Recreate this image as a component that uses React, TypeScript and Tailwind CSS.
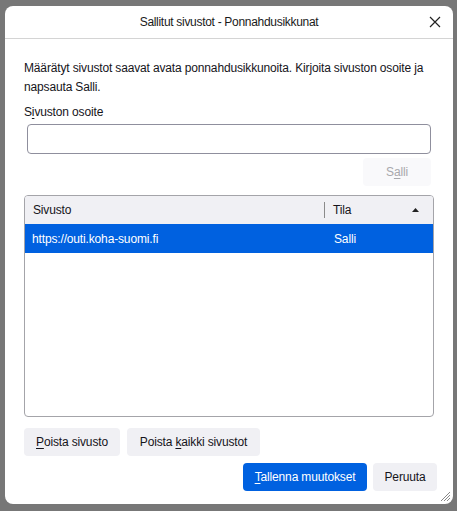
import React from 'react';

const font = { fontFamily: '"Liberation Sans", Arial, sans-serif' };

function U({ children }: { children: React.ReactNode }) {
  return <span className="underline underline-offset-2">{children}</span>;
}

export default function App() {
  return (
    <div className="w-[457px] h-[511px] bg-[#777777] pt-[6px] pl-[5px]" style={font}>
      <div className="w-[448px] h-[498px] bg-white rounded-[8px] flex flex-col text-[12px] tracking-[-0.15px] text-[#15141a] relative overflow-hidden">
        {/* Title bar */}
        <div className="h-[33px] shrink-0 flex items-center justify-center border-b border-[#d4d4d4] relative">
          <span className="text-[#1a1a1a] tracking-[-0.3px]">Sallitut sivustot - Ponnahdusikkunat</span>
          <svg className="absolute right-[12px] top-[10px]" width="12" height="12" viewBox="0 0 12 12">
            <path d="M1 1 L11 11 M11 1 L1 11" stroke="#222" strokeWidth="1.2" />
          </svg>
        </div>

        <div className="flex flex-col px-[19px] pt-[20px]">
          <p className="leading-[19px]">
            Määrätyt sivustot saavat avata ponnahdusikkunoita. Kirjoita sivuston osoite ja napsauta Salli.
          </p>
          <label className="mt-[7px] leading-[16px]">
            S<U>i</U>vuston osoite
          </label>
          <input className="mt-[4px] ml-[3px] mr-[3px] h-[30px] border border-[#8f8f9d] rounded-[4px] outline-none" />
          <div className="flex justify-end mt-[4px] mr-[3px]">
            <button className="w-[68px] h-[28px] bg-[#f9f9fb] text-[#a8a8ad] rounded-[4px]">
              S<U>a</U>lli
            </button>
          </div>

          {/* Table */}
          <div className="mt-[9px] h-[222px] border border-[#a4a4a9] rounded-[4px] overflow-hidden flex flex-col">
            <div className="h-[28px] bg-[#f0f0f4] flex items-center shrink-0">
              <div className="w-[300px] pl-[8px] border-r border-[#8a8a8a] h-[16px] flex items-center">Sivusto</div>
              <div className="flex-1 pl-[8px] flex items-center justify-between pr-[14px]">
                <span>Tila</span>
                <svg width="7" height="4" viewBox="0 0 7 4">
                  <path d="M0 4 L3.5 0 L7 4 Z" fill="#222" />
                </svg>
              </div>
            </div>
            <div className="h-[29px] bg-[#0061e0] text-white flex items-center shrink-0">
              <div className="w-[309px] pl-[7px]">https://outi.koha-suomi.fi</div>
              <div>Salli</div>
            </div>
          </div>

          <div className="flex gap-[7px] mt-[11px]">
            <button className="w-[96px] h-[28px] bg-[#f0f0f4] rounded-[4px]">
              <U>P</U>oista sivusto
            </button>
            <button className="w-[133px] h-[28px] bg-[#f0f0f4] rounded-[4px]">
              Poista <U>k</U>aikki sivustot
            </button>
          </div>
          <div className="flex justify-end gap-[6px] mt-[7px] mr-[-3px]">
            <button className="w-[124px] h-[28px] bg-[#0061e0] text-white rounded-[4px]">
              <U>T</U>allenna muutokset
            </button>
            <button className="w-[64px] h-[28px] bg-[#f0f0f4] rounded-[4px]">Peruuta</button>
          </div>
        </div>

        <svg className="absolute right-[2px] bottom-[2px]" width="12" height="12" viewBox="0 0 12 12">
          <path d="M11 2 L2 11 M11 5 L5 11 M11 8 L8 11" stroke="#888" strokeWidth="1" />
        </svg>
      </div>
    </div>
  );
}
